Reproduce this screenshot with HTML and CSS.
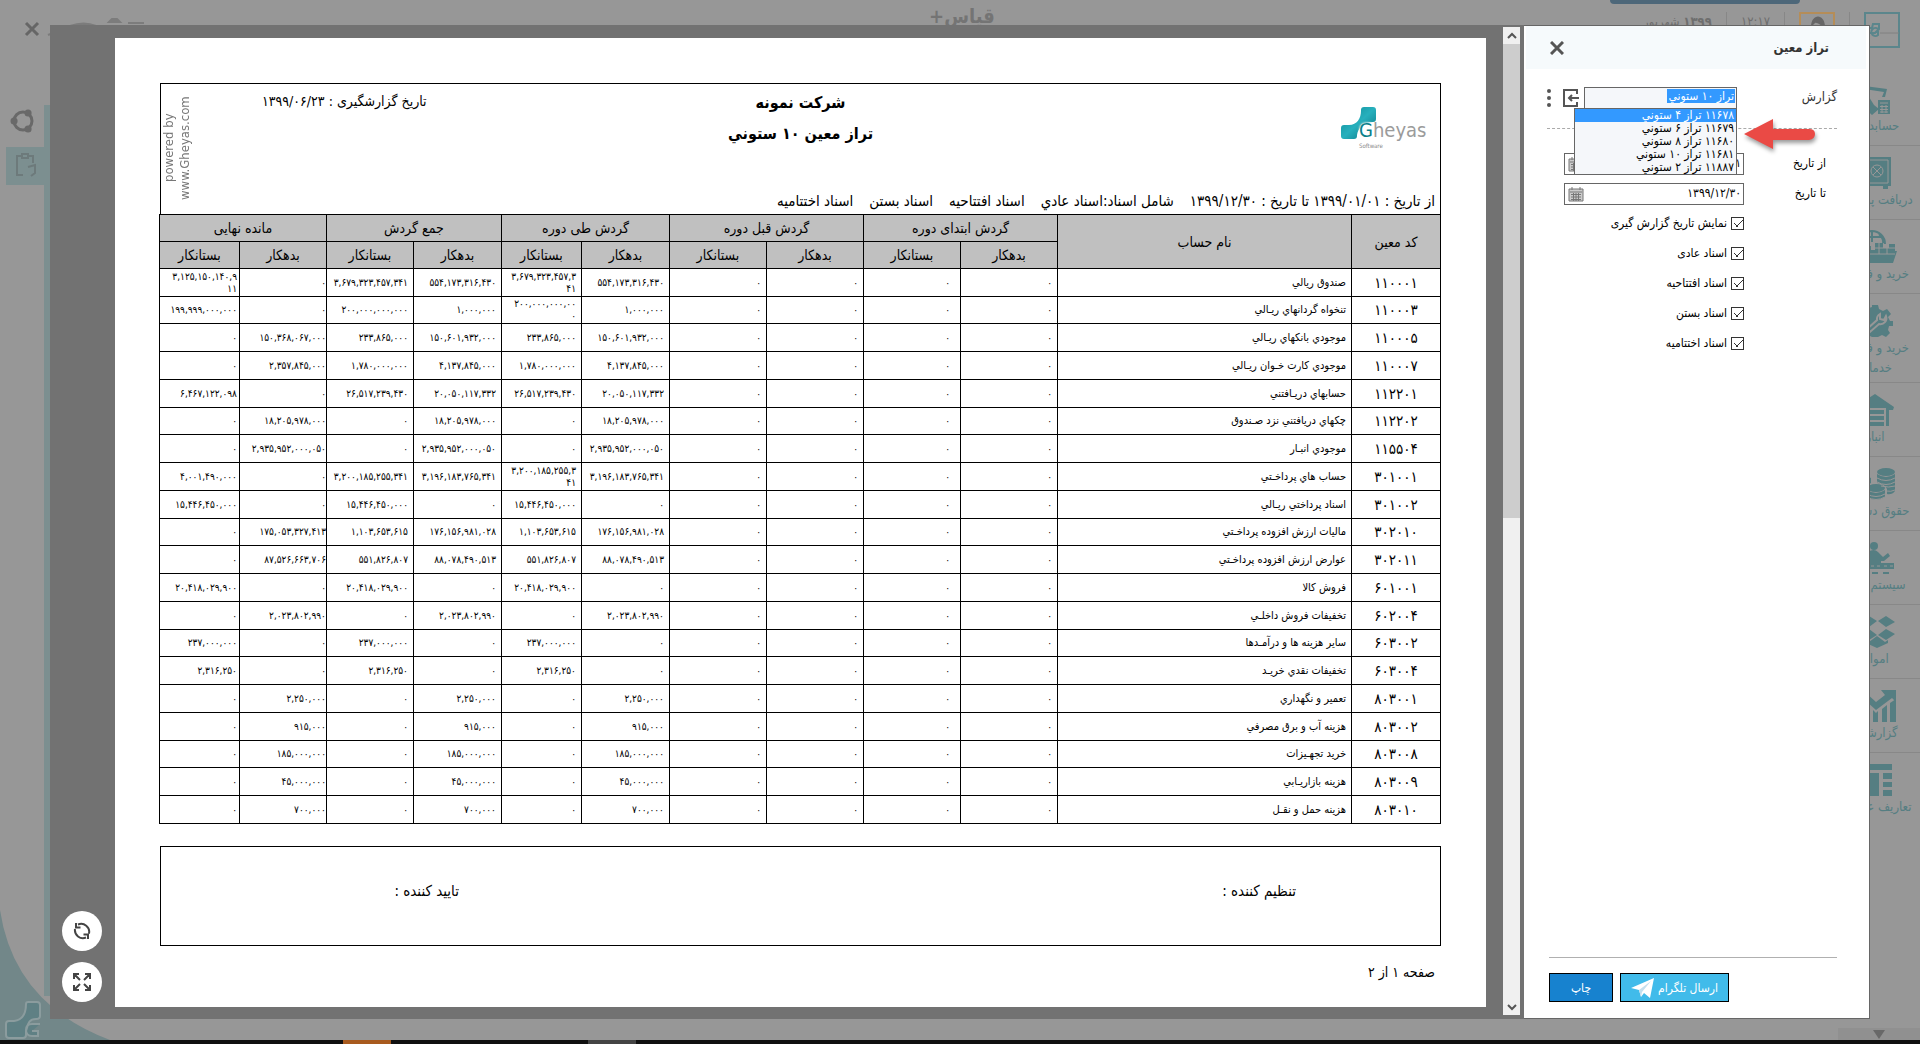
FILE: index.html
```html
<!DOCTYPE html>
<html lang="fa" dir="rtl">
<head>
<meta charset="utf-8">
<title>قیاس+ | تراز معین</title>
<link rel="stylesheet" href="styles.css">
</head>
<body>
<div class="app">
  <header class="app-header">
    <div class="account">
      <svg class="company-badge" viewBox="0 0 36 36"><rect x="1" y="1" width="34" height="34"/><path d="M9 12h6v5l-4 4H5v-5h3zM14 17a4 4 0 1 0 0 6v-3h-2"/><path class="thin" d="M16 21h19"/></svg>
      <span class="rule"></span>
      <svg class="avatar" viewBox="0 0 36 36"><rect x="1" y="1" width="34" height="34"/><path d="M12 15c0-14 14-14 14 0-4-1-8-5-10-4z"/></svg>
      <span class="rule"></span>
      <span class="clock">۱۲:۱۷</span>
      <span class="rule"></span>
      <span class="clock"><b>۱۳۹۹</b> شهریور</span>
    </div>
    <h1 class="brand">قیاس+</h1>
    <svg class="window-tools" viewBox="0 0 130 36"><path class="close" d="M2 15l12 12M14 15L2 27"/><path class="soft" d="M24 27q4-2 7-2M46 18q14-5 26 0zM85 14l3-3h5l3 3zM104 15h16"/></svg>
    <div class="toast"></div>
  </header>
  <div class="app-main">
    <nav class="modules">
      <a href="#"><svg viewBox="0 0 48 32"><path d="M6 2l30 4-2 8h-3l2-5-20-3 10 16 5 4-7 6L8 20zM27 17h12v14H27z"/><path class="cut" d="M29 20h8M29 23.500h8M29 26.500h8M29 29h8M31 22v8M35 22v8"/></svg>حسابداری</a>
      <a href="#"><svg viewBox="0 0 48 32"><path d="M4 0h36v29h-3v3h-5v-3H12v3H7v-3H4z"/><path class="cut" d="M16 3h21v23H16z"/><circle class="cut" cx="26" cy="14" r="6"/><path class="cut" d="M22 10l8 8M30 10l-8 8"/></svg>دریافت پرداخت</a>
      <a href="#"><svg viewBox="0 0 48 32"><path d="M2 22h10v-7h8v4h4v-7h8v5h6v-4h6v7h2l-4 12H6z"/><path class="line" d="M8 13a13 13 0 0 1 26 0M21 1v10M14 3q-5 5-4 9M28 3q5 5 4 9M11 6h20"/><path class="cut" d="M2 23h42M24 17h20M28 12v11M36 14v9"/></svg>خرید و فروش</a>
      <a href="#" class="tall"><svg viewBox="0 0 48 32"><path d="M21 0h6l1 4 4 2 4-2 4 5-3 3 2 4h3v5h-4l-1 4 2 3-4 4-4-2-4 2h-6l-4-2-4 2-4-4 3-4-2-4-4-1v-5l4-1 2-4-2-4 4-4 4 2 3-1z"/><path class="line cut" d="M16 24l10-9a6 6 0 0 1 3-6v5l4 1 2-4a6 6 0 0 1-7 8L19 27z"/></svg>خرید و فروش خدمات</a>
      <a href="#"><svg viewBox="0 0 48 32"><path d="M2 14L24 0l19 13-1 3h-4v16h-3V14H13v18h-3V16zM15 16h18v4H15zM15 22h18v4H15zM15 28h18v4H15z"/></svg>انبار</a>
      <a href="#"><svg viewBox="0 0 48 32"><ellipse cx="35" cy="4" rx="9" ry="4"/><path d="M26 6q9 6 18 0v17q-3 4-8 3v-5q-2-5-10-6zM2 10q8-6 18 0v5q-6 3-6 8v5q-9 0-12-4z"/><ellipse cx="25" cy="20" rx="9" ry="4"/><path d="M16 22q9 6 18 0v7q-9 6-18 0z"/><path class="cut" d="M26 10q9 5 18 0M26 14q9 5 18 0M30 18q8 2 14 0M35 23q5 1 9-1M16 26q9 5 18 0M16 29q9 5 18 0"/></svg>حقوق دستمزد</a>
      <a href="#"><svg viewBox="0 0 48 32"><circle cx="23" cy="4" r="4"/><path d="M17 21V10q6-4 10 0l5 5 5-4 2 3-6 5h-3v2h13v6H4v-6h12zM9 30h6v2H9zM21 30h6v2h-6zM32 30h6v2h-6z"/><path class="cut" d="M26 24h3M33 24h3M39 24h3M20 24h3"/></svg>سیستم تولید</a>
      <a href="#"><svg viewBox="0 0 48 32"><path d="M10 5l8-5 8 5-8 6zM27 5l8-5 9 6-9 5zM10 18l8-5 8 6-8 5zM27 19l8-6 9 5-9 6zM15 24l3 2 8-6 8 6 3-2v3l-11 5-11-5z"/></svg>اموال</a>
      <a href="#"><svg viewBox="0 0 48 32"><path d="M4 17L15 3l10 9 9-7-4-5h15v12l-4-4-16 12-9-8L6 25zM12 32V22l5-4v14zM22 32V20l3 3 2-2v11zM31 32V19l5-4v17zM39 32V13l6-4v23z"/></svg>گزارشات</a>
      <a href="#"><svg viewBox="0 0 48 32"><path d="M8 0h33v6H8zM8 9h20v23H8zM32 9h9v6h-9zM32 18h9v5h-9zM32 26h9v6h-9z"/></svg>تعاریف عمومی</a>
    </nav>
    <aside class="quick-tabs">
      <svg class="quick-icon" viewBox="0 0 26 26"><circle cx="13" cy="13" r="9"/><path d="M4 13h.1M18 5h.1M18 21h.1"/></svg>
      <span class="quick-tab"><svg viewBox="0 0 24 26"><path d="M9 23H3V4h4M15 4h4v7M8 2h6v4H8zM14 15l7-2v8l-4 3"/></svg></span>
    </aside>
  </div>
  <svg class="corner" viewBox="0 0 112 130"><path class="wave" d="M0 0q14 94 110 130H0z"/><path class="mark" d="M26 94q0-2 2-2h9q3 0 3 3v11q0 3-4 3c-8 0-8 6-10 12v4q0 3-3 3H9q-3 0-3-3v-11q0-3 3-3h5c9-1 12-7 12-17zM40 114h-8q-6 0-6 6t6 6h6v-5h-6"/></svg>
  <div class="scroll-hint"><span></span></div>
  <footer class="taskbar"><i class="active"></i><i></i></footer>
</div>

<div class="modal">
  <form class="panel">
    <header class="panel-head">
      <h2>تراز معین</h2>
      <button type="button" class="close-btn" aria-label="بستن"><svg viewBox="0 0 14 14"><path d="M1 1l12 12M13 1L1 13"/></svg></button>
    </header>
    <div class="report-row">
      <label for="report">گزارش</label>
      <div class="combo">
        <input id="report" type="text" value="تراز ۱۰ ستوني" autocomplete="off">
        <ul class="options">
          <li class="selected">۱۱۶۷۸ تراز ۴ ستوني</li>
          <li>۱۱۶۷۹ تراز ۶ ستوني</li>
          <li>۱۱۶۸۰ تراز ۸ ستوني</li>
          <li>۱۱۶۸۱ تراز ۱۰ ستوني</li>
          <li>۱۱۸۸۷ تراز ۲ ستوني</li>
        </ul>
        <svg class="pointer" viewBox="0 0 78 38"><path d="M2 17L31 2v10h36q6 0 6 5t-6 6H31v9z"/></svg>
      </div>
      <button type="button" class="icon-btn" aria-label="ورود"><svg viewBox="0 0 16 18"><path d="M14 5V1H1v16h13v-4"/><path class="arrow" d="M16 9H6M9 6L6 9l3 3"/></svg></button>
      <button type="button" class="dots-btn" aria-label="بیشتر"><svg viewBox="0 0 4 18"><circle cx="2" cy="2" r="2"/><circle cx="2" cy="9" r="2"/><circle cx="2" cy="16" r="2"/></svg></button>
    </div>
    <div class="date-row">
      <label for="from">از تاریخ</label>
      <div class="date-box"><input id="from" type="text" value="۱۳۹۹/۰۱/۰۱"><svg viewBox="0 0 16 16"><path d="M1 3h14v12H1z"/><path class="grid" d="M2 6h12M3 8.500h10M3 11h10M3 13.500h10M5.500 7v8M8 7v8M10.500 7v8M4 1v3M12 1v3"/></svg></div>
    </div>
    <div class="date-row">
      <label for="to">تا تاریخ</label>
      <div class="date-box"><input id="to" type="text" value="۱۳۹۹/۱۲/۳۰"><svg viewBox="0 0 16 16"><path d="M1 3h14v12H1z"/><path class="grid" d="M2 6h12M3 8.500h10M3 11h10M3 13.500h10M5.500 7v8M8 7v8M10.500 7v8M4 1v3M12 1v3"/></svg></div>
    </div>
    <div class="checks">
      <label><input type="checkbox" checked>نمایش تاریخ گزارش گیری</label>
      <label><input type="checkbox" checked>اسناد عادی</label>
      <label><input type="checkbox" checked>اسناد افتتاحیه</label>
      <label><input type="checkbox" checked>اسناد بستن</label>
      <label><input type="checkbox" checked>اسناد اختتامیه</label>
    </div>
    <footer class="panel-foot">
      <button type="button" class="btn telegram">ارسال تلگرام<svg viewBox="0 0 23 20"><path d="M0 10L23 0l-4 20-6-5-3 4-2-7z"/><path class="fold" d="M8 12L20 3l-9 11-1 5z"/></svg></button>
      <button type="button" class="btn print">چاپ</button>
    </footer>
  </form>

  <section class="viewer">
    <div class="scrollbar">
      <svg viewBox="0 0 17 17"><path d="M5 11l4-4 4 4"/></svg>
      <span class="thumb"></span>
      <svg viewBox="0 0 17 17"><path d="M5 7l4 4 4-4"/></svg>
    </div>
    <article class="paper">
      <header class="report-head">
        <div class="logo">
          <svg viewBox="0 0 36 34"><defs><linearGradient id="teal" x1="0" y1="0" x2="1" y2="1"><stop offset="0" stop-color="#0b8793"/><stop offset="0.500" stop-color="#27b0bd"/><stop offset="1" stop-color="#07707c"/></linearGradient></defs><path fill="url(#teal)" d="M20 3q0-3 3-3h9q3 0 3 3v9q0 3-3 3c-9 0-15 6-16 13v1q0 3-3 3H3q-3 0-3-3v-8q0-3 3-3h5c8 0 12-7 12-14z"/></svg>
          <span class="wordmark"><b>G</b>heyas</span>
          <small>Software</small>
        </div>
        <div class="titles"><h3>شرکت نمونه</h3><h3>تراز معین ۱۰ ستوني</h3></div>
        <div class="head-left">
          <span class="made">تاریخ گزارشگیری : ۱۳۹۹/۰۶/۲۳</span>
          <span class="powered">powered by<br>www.Gheyas.com</span>
        </div>
        <div class="filters"><span>از تاریخ : ۱۳۹۹/۰۱/۰۱ تا تاریخ : ۱۳۹۹/۱۲/۳۰</span><span>شامل اسناد:اسناد عادي</span><span>اسناد افتتاحيه</span><span>اسناد بستن</span><span>اسناد اختتاميه</span></div>
      </header>
      <table class="ledger">
        <colgroup><col class="c-code"><col class="c-name"><col class="c-97"><col class="c-97"><col class="c-97"><col class="c-97"><col class="c-88"><col class="c-80"><col class="c-88"><col class="c-87"><col class="c-87"><col class="c-80"></colgroup>
        <thead>
          <tr><th rowspan="2">کد معین<th rowspan="2">نام حساب<th colspan="2">گردش ابتدای دوره<th colspan="2">گردش قبل دوره<th colspan="2">گردش طی دوره<th colspan="2">جمع گردش<th colspan="2">مانده نهایی</tr>
          <tr><th>بدهکار<th>بستانکار<th>بدهکار<th>بستانکار<th>بدهکار<th>بستانکار<th>بدهکار<th>بستانکار<th>بدهکار<th>بستانکار</tr>
        </thead>
        <tbody>
          <tr><td>۱۱۰۰۰۱<td>صندوق ريالي<td>۰<td>۰<td>۰<td>۰<td>۵۵۴,۱۷۳,۳۱۶,۴۳۰<td>۳,۶۷۹,۳۲۳,۴۵۷,۳<br>۴۱<td>۵۵۴,۱۷۳,۳۱۶,۴۳۰<td>۳,۶۷۹,۳۲۳,۴۵۷,۳۴۱<td>۰<td>۳,۱۲۵,۱۵۰,۱۴۰,۹<br>۱۱</tr>
          <tr><td>۱۱۰۰۰۳<td>تنخواه گردانهاي ريـالي<td>۰<td>۰<td>۰<td>۰<td>۱,۰۰۰,۰۰۰<td>۲۰۰,۰۰۰,۰۰۰,۰۰<br>۰<td>۱,۰۰۰,۰۰۰<td>۲۰۰,۰۰۰,۰۰۰,۰۰۰<td>۰<td>۱۹۹,۹۹۹,۰۰۰,۰۰۰</tr>
          <tr><td>۱۱۰۰۰۵<td>موجودي بانکهاي ريـالي<td>۰<td>۰<td>۰<td>۰<td>۱۵۰,۶۰۱,۹۳۲,۰۰۰<td>۲۳۳,۸۶۵,۰۰۰<td>۱۵۰,۶۰۱,۹۳۲,۰۰۰<td>۲۳۳,۸۶۵,۰۰۰<td>۱۵۰,۳۶۸,۰۶۷,۰۰۰<td>۰</tr>
          <tr><td>۱۱۰۰۰۷<td>موجودي کارت خـوان ريـالي<td>۰<td>۰<td>۰<td>۰<td>۴,۱۳۷,۸۴۵,۰۰۰<td>۱,۷۸۰,۰۰۰,۰۰۰<td>۴,۱۳۷,۸۴۵,۰۰۰<td>۱,۷۸۰,۰۰۰,۰۰۰<td>۲,۳۵۷,۸۴۵,۰۰۰<td>۰</tr>
          <tr><td>۱۱۲۲۰۱<td>حسابهاي دريـافتني<td>۰<td>۰<td>۰<td>۰<td>۲۰,۰۵۰,۱۱۷,۳۳۲<td>۲۶,۵۱۷,۲۳۹,۴۳۰<td>۲۰,۰۵۰,۱۱۷,۳۳۲<td>۲۶,۵۱۷,۲۳۹,۴۳۰<td>۰<td>۶,۴۶۷,۱۲۲,۰۹۸</tr>
          <tr><td>۱۱۲۲۰۲<td>چکهاي دريافتني نزد صـندوق<td>۰<td>۰<td>۰<td>۰<td>۱۸,۲۰۵,۹۷۸,۰۰۰<td>۰<td>۱۸,۲۰۵,۹۷۸,۰۰۰<td>۰<td>۱۸,۲۰۵,۹۷۸,۰۰۰<td>۰</tr>
          <tr><td>۱۱۵۵۰۴<td>موجودي انبـار<td>۰<td>۰<td>۰<td>۰<td>۲,۹۳۵,۹۵۲,۰۰۰,۰۵۰<td>۰<td>۲,۹۳۵,۹۵۲,۰۰۰,۰۵۰<td>۰<td>۲,۹۳۵,۹۵۲,۰۰۰,۰۵۰<td>۰</tr>
          <tr><td>۳۰۱۰۰۱<td>حساب هاي پرداخـتي<td>۰<td>۰<td>۰<td>۰<td>۳,۱۹۶,۱۸۳,۷۶۵,۳۴۱<td>۳,۲۰۰,۱۸۵,۲۵۵,۳<br>۴۱<td>۳,۱۹۶,۱۸۳,۷۶۵,۳۴۱<td>۳,۲۰۰,۱۸۵,۲۵۵,۳۴۱<td>۰<td>۴,۰۰۱,۴۹۰,۰۰۰</tr>
          <tr><td>۳۰۱۰۰۲<td>اسناد پرداختي ريـالي<td>۰<td>۰<td>۰<td>۰<td>۰<td>۱۵,۴۴۶,۴۵۰,۰۰۰<td>۰<td>۱۵,۴۴۶,۴۵۰,۰۰۰<td>۰<td>۱۵,۴۴۶,۴۵۰,۰۰۰</tr>
          <tr><td>۳۰۲۰۱۰<td>ماليات ارزش افزوده پرداخـتي<td>۰<td>۰<td>۰<td>۰<td>۱۷۶,۱۵۶,۹۸۱,۰۲۸<td>۱,۱۰۳,۶۵۳,۶۱۵<td>۱۷۶,۱۵۶,۹۸۱,۰۲۸<td>۱,۱۰۳,۶۵۳,۶۱۵<td>۱۷۵,۰۵۳,۳۲۷,۴۱۳<td>۰</tr>
          <tr><td>۳۰۲۰۱۱<td>عوارض ارزش افزوده پرداخـتي<td>۰<td>۰<td>۰<td>۰<td>۸۸,۰۷۸,۴۹۰,۵۱۳<td>۵۵۱,۸۲۶,۸۰۷<td>۸۸,۰۷۸,۴۹۰,۵۱۳<td>۵۵۱,۸۲۶,۸۰۷<td>۸۷,۵۲۶,۶۶۳,۷۰۶<td>۰</tr>
          <tr><td>۶۰۱۰۰۱<td>فروش کالا<td>۰<td>۰<td>۰<td>۰<td>۰<td>۲۰,۴۱۸,۰۲۹,۹۰۰<td>۰<td>۲۰,۴۱۸,۰۲۹,۹۰۰<td>۰<td>۲۰,۴۱۸,۰۲۹,۹۰۰</tr>
          <tr><td>۶۰۲۰۰۴<td>تخفيفات فروش داخلـي<td>۰<td>۰<td>۰<td>۰<td>۲,۰۲۳,۸۰۲,۹۹۰<td>۰<td>۲,۰۲۳,۸۰۲,۹۹۰<td>۰<td>۲,۰۲۳,۸۰۲,۹۹۰<td>۰</tr>
          <tr><td>۶۰۳۰۰۲<td>ساير هزينه ها و درآمـدها<td>۰<td>۰<td>۰<td>۰<td>۰<td>۲۳۷,۰۰۰,۰۰۰<td>۰<td>۲۳۷,۰۰۰,۰۰۰<td>۰<td>۲۳۷,۰۰۰,۰۰۰</tr>
          <tr><td>۶۰۳۰۰۴<td>تخفيفات نقدي خريـد<td>۰<td>۰<td>۰<td>۰<td>۰<td>۲,۳۱۶,۲۵۰<td>۰<td>۲,۳۱۶,۲۵۰<td>۰<td>۲,۳۱۶,۲۵۰</tr>
          <tr><td>۸۰۳۰۰۱<td>تعمير و نگهداري<td>۰<td>۰<td>۰<td>۰<td>۲,۲۵۰,۰۰۰<td>۰<td>۲,۲۵۰,۰۰۰<td>۰<td>۲,۲۵۰,۰۰۰<td>۰</tr>
          <tr><td>۸۰۳۰۰۲<td>هزينه آب و برق مصرفي<td>۰<td>۰<td>۰<td>۰<td>۹۱۵,۰۰۰<td>۰<td>۹۱۵,۰۰۰<td>۰<td>۹۱۵,۰۰۰<td>۰</tr>
          <tr><td>۸۰۳۰۰۸<td>خريد تجهـيزات<td>۰<td>۰<td>۰<td>۰<td>۱۸۵,۰۰۰,۰۰۰<td>۰<td>۱۸۵,۰۰۰,۰۰۰<td>۰<td>۱۸۵,۰۰۰,۰۰۰<td>۰</tr>
          <tr><td>۸۰۳۰۰۹<td>هزينه بازاريـابي<td>۰<td>۰<td>۰<td>۰<td>۴۵,۰۰۰,۰۰۰<td>۰<td>۴۵,۰۰۰,۰۰۰<td>۰<td>۴۵,۰۰۰,۰۰۰<td>۰</tr>
          <tr><td>۸۰۳۰۱۰<td>هزينه حمل و نقـل<td>۰<td>۰<td>۰<td>۰<td>۷۰۰,۰۰۰<td>۰<td>۷۰۰,۰۰۰<td>۰<td>۷۰۰,۰۰۰<td>۰</tr>
        </tbody>
      </table>
      <div class="signatures"><span>تنظیم کننده :</span><span>تایید کننده :</span></div>
      <p class="page-no">صفحه ۱ از ۲</p>
    </article>
    <div class="viewer-tools">
      <button type="button" aria-label="بازخوانی"><svg viewBox="0 0 18 18"><path d="M5 2.500a8 8 0 0 1 11 9M13 15.500A8 8 0 0 1 2 7M7.500 5.500H3V1M10.500 12.500H15V17"/></svg></button>
      <button type="button" aria-label="تمام صفحه"><svg viewBox="0 0 18 18"><path d="M1 6V1h5M12 1h5v5M17 12v5h-5M6 17H1v-5M1 1l6 6M17 1l-6 6M17 17l-6-6M1 17l6-6"/></svg></button>
    </div>
  </section>
</div>
</body>
</html>
```
FILE: styles.css
```css
* { box-sizing: border-box; }
body {
  margin: 0;
  background: #979797;
  font-family: "DejaVu Sans Condensed", "DejaVu Sans", sans-serif;
  font-size: 12px;
  line-height: 16px;
  color: #000;
}
h1, h2, h3, p, ul { margin: 0; padding: 0; }
button, input { font: inherit; }
svg { display: block; fill: none; flex: none; }

/* application behind the dialog */
.app { min-height: 100vh; display: flex; flex-direction: column; position: relative; overflow: hidden; }
.app-header {
  display: grid;
  grid-template-columns: 1fr auto 1fr;
  padding: 0 20px 0 24px;
  height: 72px;
  position: relative;
}
.account { display: flex; gap: 14px; padding-top: 12px; color: #6e6e6e; }
.company-badge { width: 36px; height: 36px; stroke: #5b868c; stroke-width: 2; }
.company-badge .thin { stroke-width: 1; stroke: #808080; }
.avatar { width: 36px; height: 36px; stroke: #b58d58; stroke-width: 2; }
.avatar path { fill: #666; stroke: none; }
.rule { width: 1px; height: 14px; background: #878787; }
.clock { font-size: 13px; padding-top: 2px; }
.brand { font-size: 20px; line-height: 32px; color: #747474; }
.window-tools { width: 130px; height: 36px; justify-self: end; margin-top: 8px; stroke-width: 2; }
.window-tools .close { stroke: #666; stroke-width: 3; }
.window-tools .soft { fill: #7c7c7c; stroke: #7c7c7c; }
.toast { position: absolute; top: 0; right: 120px; width: 190px; height: 4px; background: #4d6779; border-radius: 0 0 4px 4px; }
.app-main { flex: 1; display: flex; justify-content: space-between; }
.modules { width: 90px; display: flex; flex-direction: column; font-size: 13px; }
.modules a {
  padding: 10px 0 9px;
  border-bottom: 1px solid #888;
  text-align: center;
  text-decoration: none;
  line-height: 20px;
  color: #557e82;
}
.modules .tall { padding-bottom: 4px; }
.modules a:last-child { border: 0; }
.modules svg { width: 48px; height: 34px; margin: 0 auto; fill: #557e82; }
.modules .cut { fill: none; stroke: #979797; stroke-width: 1; }
.modules .line { fill: none; stroke-width: 2; }
.modules .line:not(.cut) { stroke: #557e82; }
.quick-tabs { width: 50px; padding-top: 33px; height: 924px; background: linear-gradient(90deg, transparent 44px, #7c8f90 44px) 0 33px no-repeat; }
.quick-icon { width: 26px; height: 26px; margin: 3px 14px 13px auto; stroke: #696969; stroke-width: 3; stroke-linecap: round; }
.quick-icon path { stroke-width: 7; }
.quick-tab { display: flex; justify-content: flex-end; width: 38px; height: 38px; margin-right: 6px; padding: 5px 8px; background: #7c8f90; }
.quick-tab svg { width: 24px; height: 26px; stroke: #6d7a7b; stroke-width: 2; }
.corner { position: absolute; left: 0; bottom: 4px; width: 112px; height: 130px; }
.wave { fill: #728789; }
.mark { stroke: #8b9c9e; stroke-width: 2; fill: #5f8084; }
.scroll-hint { position: absolute; right: 0; bottom: 4px; width: 82px; height: 12px; padding: 2px 35px; background: #909090; }
.scroll-hint span { display: block; border: 6px solid transparent; border-top: 9px solid #686868; border-bottom: 0; }
.taskbar { display: flex; direction: ltr; gap: 197px; height: 4px; padding-left: 343px; background: #101010; }
.taskbar i { width: 48px; background: #444; }
.taskbar .active { background: #a85a1e; }

/* dialog */
.modal { position: fixed; top: 25px; right: 50px; bottom: 25px; left: 50px; display: flex; }
.panel {
  flex: none;
  width: 346px;
  display: flex;
  flex-direction: column;
  background: #fff;
  border: solid #666;
  border-width: 1px 1px 1px 0;
}
.panel-head {
  display: flex;
  justify-content: space-between;
  align-items: center;
  height: 43px;
  margin: 0 3px 18px 2px;
  padding: 0 37px 0 24px;
  background: #f6fafc;
}
.panel-head h2 { font-size: 13px; color: #333; }
.close-btn, .icon-btn, .dots-btn { padding: 0; border: 0; background: none; }
.close-btn svg { width: 14px; height: 14px; stroke: #555; stroke-width: 3; }
.report-row {
  display: flex;
  height: 42px;
  margin: 0 32px 24px 23px;
  border-bottom: 1px dashed #aaa;
}
.report-row label { width: 100px; color: #333; font-size: 13px; line-height: 20px; }
.combo { position: relative; flex: none; width: 153px; }
.combo input {
  width: 100%;
  height: 22px;
  padding: 0 2px 5px;
  border: 1px solid #666;
  color: #fff;
  background: linear-gradient(#39f, #39f) right 1px top 1px / 68px 14px no-repeat #f5f7fa;
}
.options {
  position: absolute;
  z-index: 2;
  top: 21px;
  right: 0;
  width: 163px;
  border: 1px solid #666;
  background: #f5f7fa;
  list-style: none;
}
.options li { padding-right: 2px; line-height: 13px; }
.options .selected { background: #39f; color: #fff; }
.pointer { position: absolute; top: 30px; left: 158px; width: 78px; height: 38px; fill: #ea4a45; filter: drop-shadow(1px 3px 2px #0006); }
.icon-btn { align-self: flex-start; margin: 2px 5px 0 12px; }
.icon-btn svg { width: 16px; height: 18px; stroke: #555; stroke-width: 2; }
.icon-btn .arrow { stroke-width: 2; }
.dots-btn { align-self: flex-start; margin-top: 2px; }
.dots-btn svg { width: 4px; height: 18px; fill: #555; }
.date-row { display: flex; justify-content: space-between; margin: 0 43px 8px 40px; line-height: 20px; }
.date-box { display: flex; align-items: center; justify-content: space-between; width: 180px; height: 22px; padding: 0 2px 0 3px; border: 1px solid #666; }
.date-box input { width: 120px; padding: 0 0 3px; border: 0; background: none; }
.date-box svg { width: 16px; height: 16px; stroke: #777; fill: #ccc; }
.date-row + .date-row { margin-bottom: 10px; }
.checks { display: grid; gap: 14px; margin-right: 125px; }
.checks label { display: flex; align-items: center; gap: 4px; white-space: nowrap; }
.checks input {
  appearance: none;
  width: 13px;
  height: 13px;
  margin: 0;
  border: 1px solid #333;
  background: linear-gradient(45deg, transparent 45%, #333 45% 55%, transparent 55%) 2px 5px / 4px 4px no-repeat, linear-gradient(-45deg, transparent 43%, #333 43% 57%, transparent 57%) 4px 2px / 7px 7px no-repeat, #fff;
}
.panel-foot { display: flex; justify-content: flex-end; gap: 7px; margin: auto 32px 16px 25px; padding-top: 15px; border-top: 1px solid #b0b0b0; }
.btn { display: flex; align-items: center; justify-content: center; height: 29px; padding: 0 10px; border: 1px solid #000; color: #fff; }
.telegram { gap: 4px; width: 109px; background: #41bbea; }
.telegram svg { width: 23px; height: 20px; fill: #fff; }
.telegram .fold { fill: #c4dfee; }
.print { width: 64px; background: #1782cf; }

/* report viewer */
.viewer { flex: 1; min-width: 0; display: flex; background: #727272; padding-right: 4px; }
.scrollbar { flex: none; display: flex; flex-direction: column; width: 17px; margin: 2px 0 4px 17px; background: #f0f0f0; }
.scrollbar svg { width: 17px; height: 17px; stroke: #555; stroke-width: 2; }
.thumb { height: 48%; margin-bottom: auto; background: #cdcdcd; }
.paper { flex: 1; min-width: 0; margin: 13px 0 12px; padding: 45px 45px 0; background: #fff; }
.viewer-tools { flex: none; width: 65px; display: flex; flex-direction: column; justify-content: flex-end; align-items: center; gap: 11px; padding: 0 1px 17px 0; }
.viewer-tools button { display: grid; place-items: center; width: 40px; height: 40px; padding: 0; border: 0; border-radius: 50%; background: #fff; }
.viewer-tools svg { width: 18px; height: 18px; stroke: #444; stroke-width: 2; }

.report-head {
  display: grid;
  grid-template-columns: 1fr auto 1fr;
  grid-template-rows: 107px 23px;
  border: 1px solid #000;
  border-bottom: 0;
  font-size: 14px;
}
.logo { direction: ltr; justify-self: start; position: relative; display: flex; width: 94px; height: 42px; margin: 23px 5px 0; }
.logo svg { width: 36px; height: 34px; }
.wordmark { position: absolute; left: 18px; top: 12px; font-size: 20px; line-height: 22px; color: #9b9b9b; }
.wordmark b { font-weight: 400; color: #0a7f8b; text-shadow: 0 0 2px #fff, 0 0 1px #fff, 0 0 3px #fff; }
.logo small { position: absolute; left: 18px; top: 35px; font-size: 6px; line-height: 8px; color: #888; }
.titles { padding-top: 9px; text-align: center; }
.titles h3 { font-size: 16px; line-height: 20px; margin-bottom: 11px; }
.head-left { grid-row: 1 / 3; grid-column: 3; display: flex; justify-content: flex-end; gap: 69px; }
.made { padding-top: 9px; }
.powered { direction: ltr; writing-mode: vertical-rl; transform: rotate(180deg); height: 106px; margin-top: 11px; font-size: 13px; line-height: 16px; color: #777; text-align: center; }
.filters { grid-row: 2; grid-column: 1 / 3; display: flex; gap: 16px; padding-right: 5px; font-size: 15px; line-height: 20px; white-space: nowrap; }

.ledger { width: 100%; table-layout: fixed; border-collapse: collapse; font-size: 10px; line-height: 12px; }
.c-code { width: 89px; }
.c-name { width: 294px; }
.c-97 { width: 97px; }
.c-88 { width: 88px; }
.c-87 { width: 87px; }
.c-80 { width: 80px; }
.ledger th, .ledger td { border: 1px solid #000; padding: 0; }
.ledger th { height: 27px; background: #c0c0c0; font-size: 14px; font-weight: 400; }
.ledger td { height: 28px; padding-right: 5px; text-align: right; white-space: nowrap; }
.ledger tr:nth-child(4n+2) td { height: 27px; }
.ledger td:first-child { padding: 0; text-align: center; font-size: 15px; }
.ledger td:nth-child(2) { font-size: 11px; }
.ledger td:nth-child(4) { padding-right: 10px; }
.ledger td:nth-child(11) { padding-right: 0; }
.ledger td:nth-child(12) { padding-right: 2px; }
.signatures { display: grid; grid-template-columns: 837px 1fr; align-items: center; height: 100px; margin-top: 22px; padding: 0 144px 10px 0; border: 1px solid #000; font-size: 15px; }
.page-no { padding: 18px 6px 0; font-size: 14px; }
```
